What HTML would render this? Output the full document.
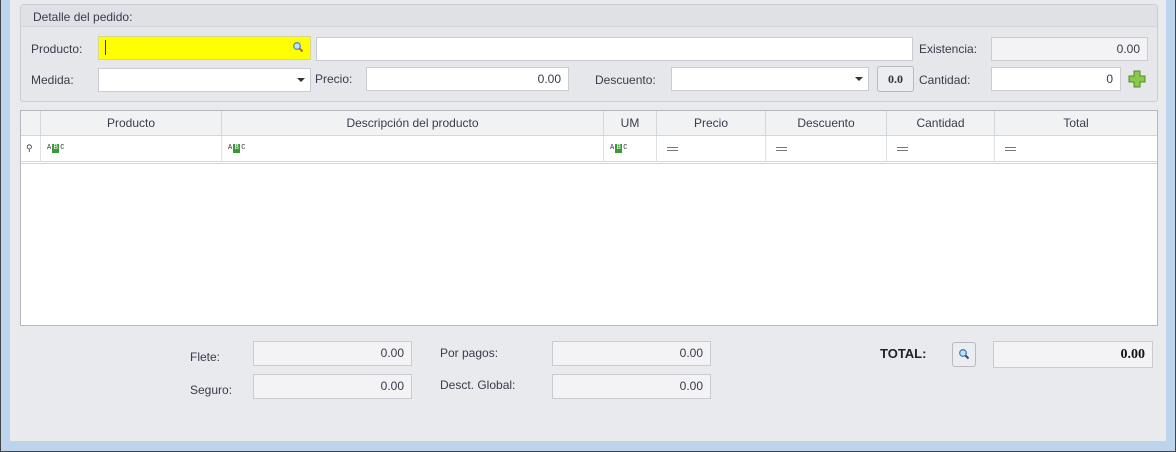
<!DOCTYPE html>
<html><head><meta charset="utf-8"><style>
*{box-sizing:border-box;margin:0;padding:0}
body{width:1176px;height:452px;overflow:hidden;background:#bcd4ec;font-family:"Liberation Sans",sans-serif;font-size:12px;color:#3a3a4a;position:relative}
.a{position:absolute}
.frame{left:0;top:0;width:1176px;height:452px;border:1px solid #444;border-top:none}
.inner{left:10px;top:0;width:1156px;height:441px;background:#e9eaee}
.lbl{position:absolute;white-space:nowrap;line-height:14px}
.inp{position:absolute;background:#fff;border:1px solid #c9cbd1;text-align:right;padding-right:7px;line-height:22px}
.gr{background:#f3f3f5}
.grid{left:20px;top:110px;width:1138px;height:216px;border:1px solid #b5b8bf;background:#fff}
.hc{position:absolute;top:0;height:25px;border-right:1px solid #d4d6db;background:#f1f2f4;text-align:center;line-height:25px;border-bottom:1px solid #d4d6db}
.fc{position:absolute;top:25px;height:26px;border-right:1px solid #e0e1e5;border-bottom:1px solid #d4d6db;padding-left:6px;display:flex;align-items:center}
.abc{display:flex;align-items:center;height:9px;font-size:7px;line-height:9px;font-family:"Liberation Mono",monospace;color:#333}
.abc b{display:inline-block;width:7px;height:9px;background:#3a9a3a;color:#fff;font-weight:normal;text-align:center;margin:0 1px}
.eq{display:inline-block;width:11px;height:4px;border-top:1px solid #777;border-bottom:1px solid #777;margin-left:4px}
</style></head><body>
<div class="a frame"></div>
<div class="a inner"></div>
<div class="a" style="left:20px;top:4px;width:1138px;height:98px;border:1px solid #cbcdd3;border-radius:3px;background:#e6e7eb"></div>
<div class="a" style="left:21px;top:5px;width:1136px;height:22px;background:#e0e1e6;border-bottom:1px solid #d4d6db"></div>
<div class="lbl" style="left:33px;top:10px">Detalle del pedido:</div>

<div class="lbl" style="left:31px;top:42px">Producto:</div>
<div class="inp" style="left:98px;top:36px;width:213px;height:24px;background:#ffff00;border-color:#d8d88a"></div>
<div class="a" style="left:105px;top:40px;width:1px;height:15px;background:#333"></div>
<svg class="a" style="left:292px;top:41px" width="12" height="12"><circle cx="5" cy="5" r="3.3" fill="#bfe4f7" stroke="#5a8fb5" stroke-width="1.3"/><path d="M7.5 7.5L10.5 10.5" stroke="#a07030" stroke-width="2"/></svg>
<div class="inp" style="left:316px;top:37px;width:597px;height:24px"></div>
<div class="lbl" style="left:919px;top:42px">Existencia:</div>
<div class="inp gr" style="left:991px;top:37px;width:157px;height:24px">0.00</div>

<div class="lbl" style="left:31px;top:73px">Medida:</div>
<div class="inp" style="left:98px;top:68px;width:213px;height:24px"></div>
<div class="a" style="left:297px;top:78px;border:4px solid transparent;border-top:4px solid #333;border-bottom:none"></div>
<div class="lbl" style="left:315px;top:72px">Precio:</div>
<div class="inp" style="left:366px;top:67px;width:203px;height:24px">0.00</div>
<div class="lbl" style="left:595px;top:73px">Descuento:</div>
<div class="inp" style="left:671px;top:67px;width:198px;height:24px"></div>
<div class="a" style="left:855px;top:77px;border:4px solid transparent;border-top:4px solid #333;border-bottom:none"></div>
<div class="a" style="left:877px;top:66px;width:37px;height:26px;border:1px solid #b8bac0;border-radius:3px;background:#ecedf0;text-align:center;line-height:24px;font-family:'Liberation Serif',serif;font-weight:bold;font-size:12px;color:#333">0.0</div>
<div class="lbl" style="left:919px;top:73px">Cantidad:</div>
<div class="inp" style="left:991px;top:67px;width:130px;height:24px">0</div>
<svg class="a" style="left:1128px;top:70px" width="18" height="18"><path d="M6 1h6v5h5v6h-5v5H6v-5H1V6h5z" fill="#8cc84b" stroke="#4f8a2a" stroke-width="1"/></svg>

<div class="a grid">
<div class="hc" style="left:0;width:20px"></div>
<div class="hc" style="left:20px;width:181px">Producto</div>
<div class="hc" style="left:201px;width:382px">Descripción del producto</div>
<div class="hc" style="left:583px;width:53px">UM</div>
<div class="hc" style="left:636px;width:109px">Precio</div>
<div class="hc" style="left:745px;width:121px">Descuento</div>
<div class="hc" style="left:866px;width:108px">Cantidad</div>
<div class="hc" style="left:974px;width:162px;border-right:none">Total</div>
<div class="fc" style="left:0;width:20px;padding-left:5px;font-size:9px">&#9906;</div>
<div class="fc" style="left:20px;width:181px"><span class="abc">A<b>B</b>C</span></div>
<div class="fc" style="left:201px;width:382px"><span class="abc">A<b>B</b>C</span></div>
<div class="fc" style="left:583px;width:53px"><span class="abc">A<b>B</b>C</span></div>
<div class="fc" style="left:636px;width:109px"><span class="eq"></span></div>
<div class="fc" style="left:745px;width:121px"><span class="eq"></span></div>
<div class="fc" style="left:866px;width:108px"><span class="eq"></span></div>
<div class="fc" style="left:974px;width:162px;border-right:none"><span class="eq"></span></div>
<div class="a" style="left:0;top:52px;width:1136px;height:1px;background:#d4d6db"></div>
</div>

<div class="lbl" style="left:190px;top:350px">Flete:</div>
<div class="inp gr" style="left:253px;top:341px;width:159px;height:25px">0.00</div>
<div class="lbl" style="left:190px;top:383px">Seguro:</div>
<div class="inp gr" style="left:253px;top:374px;width:159px;height:25px">0.00</div>
<div class="lbl" style="left:440px;top:346px">Por pagos:</div>
<div class="inp gr" style="left:552px;top:341px;width:159px;height:25px">0.00</div>
<div class="lbl" style="left:440px;top:378px">Desct. Global:</div>
<div class="inp gr" style="left:552px;top:374px;width:159px;height:25px">0.00</div>
<div class="lbl" style="left:880px;top:347px;font-weight:bold;font-size:13px;color:#222">TOTAL:</div>
<div class="a" style="left:952px;top:342px;width:24px;height:25px;border:1px solid #b8bac0;border-radius:3px;background:#ecedf0"></div>
<svg class="a" style="left:958px;top:348px" width="12" height="12"><circle cx="5" cy="5" r="3.3" fill="#bfe4f7" stroke="#4a7fb5" stroke-width="1.3"/><path d="M7.5 7.5L10.5 10.5" stroke="#2a4a8a" stroke-width="2"/></svg>
<div class="inp gr" style="left:993px;top:341px;width:160px;height:27px;line-height:25px;font-weight:bold;font-family:'Liberation Serif',serif;font-size:14px;color:#111">0.00</div>
</body></html>
